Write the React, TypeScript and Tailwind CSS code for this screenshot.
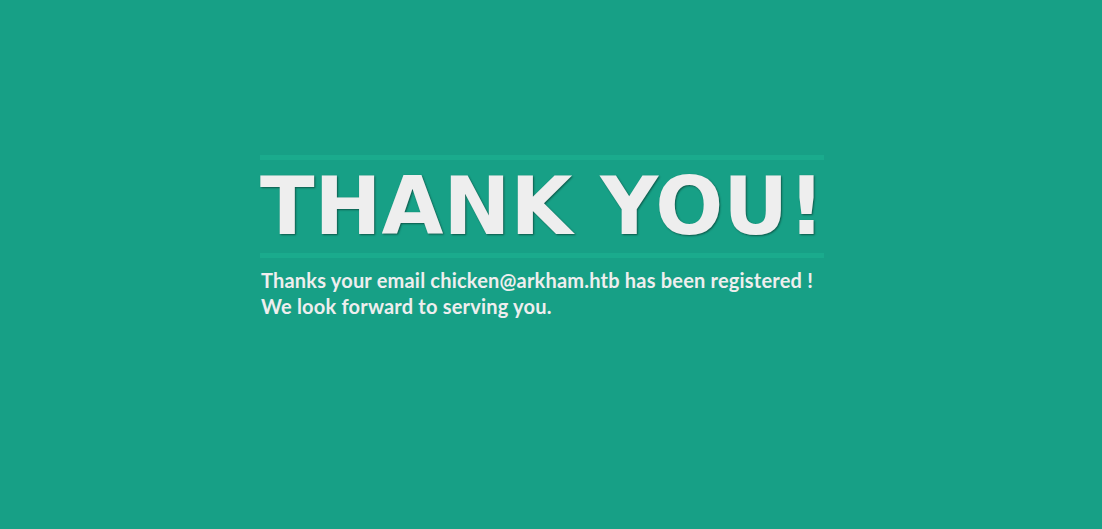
export default function App() {
  return (
    <div className="min-h-[529px] w-full bg-[#17a086] pt-[155px] pl-[260px]">
      <div className="w-[564px]">
        <div className="border-y-[5px] border-[#1aab8d] pt-[1px]">
          <h1
            className="text-[80px] leading-[92px] font-bold text-[#eeeeee] whitespace-nowrap"
            style={{ fontFamily: '"DejaVu Sans", Verdana, sans-serif', textShadow: '1px 1px 2px rgba(0,0,0,0.45)' }}
          >
            THANK YOU!
          </h1>
        </div>
        <p
          className="mt-[9px] pl-[1px] text-[20px] leading-[26px] font-bold tracking-[0.2px] text-[#eeeeee]"
          style={{ fontFamily: 'Lato, sans-serif' }}
        >
          Thanks your email chicken@arkham.htb has been registered !
          <br />
          We look forward to serving you.
        </p>
      </div>
    </div>
  );
}
